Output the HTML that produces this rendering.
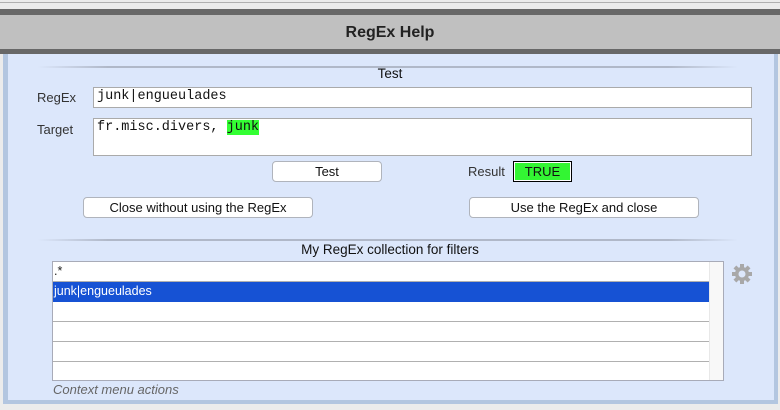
<!DOCTYPE html>
<html><head><style>
body{margin:0;width:780px;height:410px;background:#ececec;position:relative;overflow:hidden;font-family:"Liberation Sans",sans-serif;font-size:13px;color:#222}
div{position:absolute;box-sizing:border-box}
.mono{font-family:"Liberation Mono",monospace;font-size:13.5px;color:#111}
.btn{background:#fff;border:1px solid #b0b4bc;border-radius:4px;text-align:center;line-height:19px;color:#111;font-size:13px}
.row{left:0;right:14px;height:20px;border-bottom:1px solid #b0b0b0;line-height:19px;padding-left:1px;font-size:12.5px}
.sep{height:2px;background:linear-gradient(to right,rgba(150,160,180,0),#b0b8c8 10%,#b0b8c8 90%,rgba(150,160,180,0))}
</style></head><body>
<div style="left:0;top:2px;width:780px;height:1px;background:#b0b0b0"></div>
<div style="left:0;top:9px;width:780px;height:6px;background:#686868"></div>
<div style="left:0;top:15px;width:780px;height:34px;background:#c0c0c0;text-align:center;line-height:36px;font-weight:bold;font-size:16px;color:#222">RegEx Help</div>
<div style="left:0;top:49px;width:780px;height:5px;background:#686868"></div>
<div style="left:3px;top:54px;width:775px;height:350px;background:#b3c6e0"></div>
<div style="left:8px;top:54px;width:766px;height:346px;background:#dce7fb"></div>
<div class="sep" style="left:38px;top:66px;width:700px"></div>
<div style="left:0;top:66px;width:780px;text-align:center;font-size:13.5px;color:#111">Test</div>
<div style="left:37px;top:90px;color:#333">RegEx</div>
<div class="mono" style="left:93px;top:87px;width:659px;height:21px;background:#fff;border:1px solid #aaa;padding:1px 3px">junk|engueulades</div>
<div style="left:37px;top:122px;color:#333">Target</div>
<div class="mono" style="left:93px;top:118px;width:659px;height:38px;background:#fff;border:1px solid #aaa;padding:1px 3px">fr.misc.divers, <span style="background:#33ff33">junk</span></div>
<div class="btn" style="left:272px;top:161px;width:110px;height:21px">Test</div>
<div style="left:468px;top:164px;color:#333">Result</div>
<div style="left:513px;top:161px;width:59px;height:21px;background:#33f533;border:1px solid #000;box-shadow:inset 0 0 0 1px #fff;text-align:center;line-height:19px;color:#111">TRUE</div>
<div class="btn" style="left:83px;top:197px;width:230px;height:21px">Close without using the RegEx</div>
<div class="btn" style="left:469px;top:197px;width:230px;height:21px">Use the RegEx and close</div>
<div class="sep" style="left:38px;top:239px;width:700px"></div>
<div style="left:0;top:242px;width:780px;text-align:center;font-size:13.5px;color:#111">My RegEx collection for filters</div>
<div style="left:52px;top:261px;width:672px;height:120px;background:#fff;border:1px solid #a8abb8;overflow:hidden">
<div style="right:0;top:0;width:14px;height:118px;background:#f8f8f8;border-left:1px solid #e8e8e8"></div>
<div class="row" style="top:0">.*</div>
<div class="row" style="top:20px;background:#1652d4;color:#fff;border-color:#1652d4">junk|engueulades</div>
<div class="row" style="top:40px"></div>
<div class="row" style="top:60px"></div>
<div class="row" style="top:80px"></div>
</div>
<svg style="position:absolute;left:731px;top:263px" width="22" height="22" viewBox="0 0 22 22"><g fill="#a8a8a8" transform="translate(11 11)"><circle r="7"/><g id="t"><rect x="-2" y="-10" width="4" height="5"/></g><use href="#t" transform="rotate(45)"/><use href="#t" transform="rotate(90)"/><use href="#t" transform="rotate(135)"/><use href="#t" transform="rotate(180)"/><use href="#t" transform="rotate(225)"/><use href="#t" transform="rotate(270)"/><use href="#t" transform="rotate(315)"/></g><circle cx="11" cy="11" r="3.5" fill="#dce7fb"/></svg>
<div style="left:53px;top:382px;font-style:italic;color:#666;font-size:13px">Context menu actions</div>
</body></html>
